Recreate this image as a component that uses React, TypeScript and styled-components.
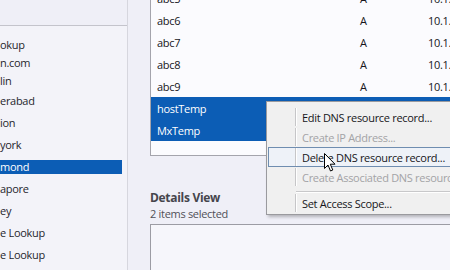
import React from 'react';
import styled, { createGlobalStyle } from 'styled-components';

const COLORS = {
  page: '#efeff7',
  panel: '#f3f3f9',
  list: '#fbfbfe',
  selection: '#0c5db5',
  text: '#16161a',
  muted: '#505057',
  border: '#a4a4ac',
  menu: '#f0f0f0',
  disabled: '#a3a3a6',
};

const GlobalStyle = createGlobalStyle`
  html, body {
    margin: 0;
    padding: 0;
    background: ${COLORS.page};
  }
  body {
    font-family: 'Open Sans', 'Noto Sans', sans-serif;
    font-size: 11px;
    letter-spacing: -0.3px;
    color: ${COLORS.text};
  }
`;

const treeItems = [
  { label: 'okup', h: 18 },
  { label: 'n.com', h: 18 },
  { label: 'lin', h: 18 },
  { label: 'erabad', h: 22 },
  { label: 'ion', h: 22 },
  { label: 'york', h: 22 },
  { label: 'mond', h: 22, selected: true },
  { label: 'apore', h: 22 },
  { label: 'ey', h: 22 },
  { label: 'e Lookup', h: 22 },
  { label: 'e Lookup', h: 22 },
];

const records = [
  { name: 'abc5', type: 'A', ip: '10.1.1.5' },
  { name: 'abc6', type: 'A', ip: '10.1.1.6' },
  { name: 'abc7', type: 'A', ip: '10.1.1.7' },
  { name: 'abc8', type: 'A', ip: '10.1.1.8' },
  { name: 'abc9', type: 'A', ip: '10.1.1.9' },
  { name: 'hostTemp', type: '', ip: '', selected: true },
  { name: 'MxTemp', type: '', ip: '', selected: true },
];

const menuItems = [
  { label: 'Edit DNS resource record...' },
  { label: 'Create IP Address...', disabled: true },
  { label: 'Delete DNS resource record...', hover: true },
  { label: 'Create Associated DNS resource record...', disabled: true },
  { separator: true },
  { label: 'Set Access Scope...' },
];

const App = () => {
  return (
    <Page>
      <GlobalStyle />
      <Sidebar>
        <SidebarHeader />
        <Tree>
          {treeItems.map((item, i) => (
            <TreeRow key={i} $h={item.h}>
              <TreeLabel $selected={!!item.selected}>{item.label}</TreeLabel>
            </TreeRow>
          ))}
        </Tree>
      </Sidebar>

      <Main>
        <RecordList>
          <RecordRows>
            {records.map((r) => (
              <RecordRow key={r.name} $selected={!!r.selected}>
                <span>{r.name}</span>
                <span>{r.type}</span>
                <span>{r.ip}</span>
              </RecordRow>
            ))}
          </RecordRows>
        </RecordList>

        <DetailsTitle>Details View</DetailsTitle>
        <DetailsSubtitle>2 items selected</DetailsSubtitle>
        <DetailsBox />
      </Main>

      <ContextMenu>
        {menuItems.map((item, i) =>
          item.separator ? (
            <MenuSeparator key={i} />
          ) : (
            <MenuItem key={i} $disabled={!!item.disabled} $hover={!!item.hover}>
              <MenuGutter />
              <MenuText>{item.label}</MenuText>
            </MenuItem>
          )
        )}
      </ContextMenu>

      <Cursor width="12" height="19" viewBox="0 0 12 19">
        <path
          d="M0.5 0.5 L0.5 15.5 L4 12 L6.5 18 L8.8 17 L6.3 11.2 L11 11.2 Z"
          fill="#fff"
          stroke="#000"
          strokeWidth="1"
          strokeLinejoin="round"
        />
      </Cursor>
    </Page>
  );
};

const Page = styled.div`
  position: relative;
  display: flex;
  width: 450px;
  height: 270px;
  overflow: hidden;
  background: ${COLORS.page};
`;

const Sidebar = styled.div`
  flex: 0 0 127px;
  display: flex;
  flex-direction: column;
  border-right: 1px solid #d6d6de;
  background: ${COLORS.panel};
  overflow: hidden;
`;

const SidebarHeader = styled.div`
  height: 25px;
  background: ${COLORS.page};
  border-bottom: 1px solid #c4c4cc;
`;

const Tree = styled.div`
  display: flex;
  flex-direction: column;
  padding-top: 10px;
`;

const TreeRow = styled.div<{ $h: number }>`
  height: ${(p) => p.$h}px;
  display: flex;
  align-items: center;
  padding-right: 5px;
`;

const TreeLabel = styled.div<{ $selected: boolean }>`
  flex: 1;
  height: 14px;
  line-height: 14px;
  white-space: nowrap;
  color: ${(p) => (p.$selected ? '#fff' : '#26262c')};
  background: ${(p) => (p.$selected ? COLORS.selection : 'transparent')};
`;

const Main = styled.div`
  flex: 1;
  display: flex;
  flex-direction: column;
  padding-left: 22px;
  min-width: 0;
`;

const RecordList = styled.div`
  height: 155px;
  flex: 0 0 auto;
  background: ${COLORS.list};
  border-left: 1px solid ${COLORS.border};
  border-bottom: 1px solid ${COLORS.border};
  overflow: hidden;
`;

const RecordRows = styled.div`
  margin-top: -13px;
`;

const RecordRow = styled.div<{ $selected: boolean }>`
  display: grid;
  grid-template-columns: 203px 68px 1fr;
  height: 22px;
  align-items: center;
  padding-left: 6px;
  white-space: nowrap;
  color: ${(p) => (p.$selected ? '#fff' : COLORS.text)};
  background: ${(p) => (p.$selected ? COLORS.selection : 'transparent')};
`;

const DetailsTitle = styled.div`
  margin-top: 34px;
  font-size: 12px;
  font-weight: 700;
  line-height: 16px;
  color: #45454c;
`;

const DetailsSubtitle = styled.div`
  font-size: 11px;
  line-height: 16px;
  color: ${COLORS.muted};
`;

const DetailsBox = styled.div`
  flex: 1;
  margin-top: 2px;
  background: #f6f6fb;
  border-top: 1px solid #9c9ca4;
  border-left: 1px solid #9c9ca4;
`;

const ContextMenu = styled.div`
  position: absolute;
  left: 266px;
  top: 101px;
  width: 230px;
  padding: 5px 0 1px;
  background: ${COLORS.menu};
  border: 1px solid #9a9a9e;
  box-shadow: 2px 2px 3px rgba(0, 0, 0, 0.25);
`;

const MenuItem = styled.div<{ $disabled: boolean; $hover: boolean }>`
  display: flex;
  height: 20px;
  align-items: center;
  margin: 0 0 0 1px;
  box-sizing: border-box;
  border: 1px solid ${(p) => (p.$hover ? '#6f8db0' : 'transparent')};
  border-right: none;
  background: ${(p) => (p.$hover ? '#eef2f8' : 'transparent')};
  color: ${(p) => (p.$disabled ? COLORS.disabled : COLORS.text)};
`;

const MenuGutter = styled.div`
  align-self: stretch;
  width: 26px;
  flex: 0 0 26px;
  border-right: 1px solid #c6c6c8;
  box-shadow: 1px 0 0 #fff;
`;

const MenuText = styled.span`
  padding-left: 6px;
  white-space: nowrap;
`;

const MenuSeparator = styled.div`
  height: 4px;
  margin-left: 29px;
  border-bottom: 1px solid #c8c8ca;
  box-shadow: 0 1px 0 #fff;
  margin-bottom: 1px;
`;

const Cursor = styled.svg`
  position: absolute;
  left: 324px;
  top: 153px;
`;

export default App;
